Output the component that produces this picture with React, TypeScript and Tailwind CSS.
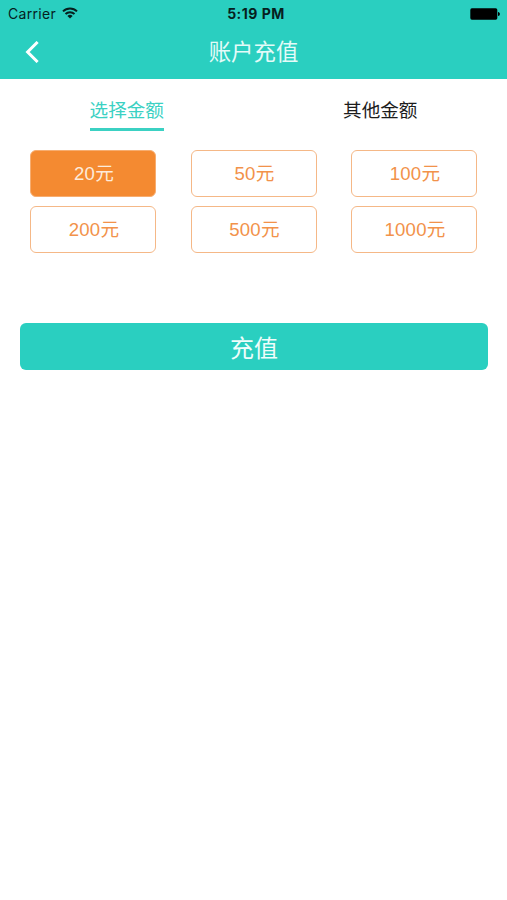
import { useState } from 'react'

const amounts = [20, 50, 100, 200, 500, 1000]

const tabs = ['选择金额', '其他金额']

function WifiIcon() {
  return (
    <svg width="16" height="12" viewBox="0 0 16 12" fill="none" stroke="#06201e" strokeWidth="2" className="-mt-[2px]">
      <path d="M1 4.4a10 10 0 0 1 14 0" />
      <path d="M3.5 7a6.4 6.4 0 0 1 9 0" />
      <path d="M8 11.6L5.4 9a3.7 3.7 0 0 1 5.2 0z" fill="#06201e" stroke="none" />
    </svg>
  )
}

function BatteryIcon() {
  return (
    <svg width="30" height="12" viewBox="0 0 30 12" fill="#000">
      <rect x="0.3" y="0.3" width="27" height="11.4" rx="1.6" />
      <path d="M28 3.9c1.2.2 1.9 1 1.9 2.1s-.7 1.9-1.9 2.1z" />
    </svg>
  )
}

function StatusBar() {
  return (
    <div className="grid h-[27px] grid-cols-3 items-center pr-[7px] pl-[8px] font-['Inter',sans-serif] text-[#06201e]">
      <div className="flex items-center gap-[6px] text-[14px] tracking-[0.3px]">
        Carrier
        <WifiIcon />
      </div>
      <div className="pl-[4px] text-center text-[14px] font-bold tracking-[0.5px] whitespace-nowrap">5:19 PM</div>
      <div className="flex justify-end">
        <BatteryIcon />
      </div>
    </div>
  )
}

export default function App() {
  const [tab, setTab] = useState(0)
  const [selected, setSelected] = useState(20)

  return (
    <div className="min-h-[900px] w-full bg-white font-['Liberation_Sans','Noto_Sans_CJK_SC',sans-serif]">

      {/* Header */}

      <header className="h-[79px] bg-[#2acfc0]">
        <StatusBar />
        <div className="grid h-[50px] grid-cols-[60px_1fr_60px] items-center">
          <button className="pb-[3px] pl-[25px]">
            <svg width="14" height="22" viewBox="0 0 14 22" fill="none" stroke="#fff" strokeWidth="3">
              <path d="M12.6 1L2.6 11l10 10" />
            </svg>
          </button>
          <h1 className="text-center text-[22.4px] leading-[52px] text-[#e4fbf8]">账户充值</h1>
        </div>
      </header>

      {/* Tabs */}

      <div className="grid grid-cols-2">
        {tabs.map((label, i) => (
          <button
            key={label}
            onClick={() => setTab(i)}
            className="flex justify-center"
          >
            <span
              className={
                tab === i
                  ? 'h-[52px] border-b-[3px] border-[#3bd1c3] text-[18.6px] leading-[63px] text-[#3bd1c3]'
                  : 'h-[52px] text-[18.6px] leading-[63px] text-[#1c1c1c]'
              }
            >
              {label}
            </span>
          </button>
        ))}
      </div>

      {/* Amounts */}

      <div className="mt-[19px] grid grid-cols-[126px_126px_126px] justify-between gap-y-[9px] pr-[30px] pl-[30px]">
        {amounts.map((amount) => (
          <button
            key={amount}
            onClick={() => setSelected(amount)}
            className={
              selected === amount
                ? 'h-[47px] rounded-[6px] border border-[#f7ad70] bg-[#f48a31] pl-[2px] text-[18.6px] tracking-[0.2px] text-[#fdebdb]'
                : 'h-[47px] rounded-[6px] border border-[#f5b887] bg-white pl-[2px] text-[18.6px] tracking-[0.2px] text-[#f2924a]'
            }
          >
            {amount}元
          </button>
        ))}
      </div>

      {/* Submit */}

      <div className="mt-[70px] pr-[19px] pl-[20px]">
        <button className="h-[47px] w-full rounded-[6px] bg-[#2acfc0] pt-[4px] text-[24px] text-[#effdfb]">
          充值
        </button>
      </div>

    </div>
  )
}
